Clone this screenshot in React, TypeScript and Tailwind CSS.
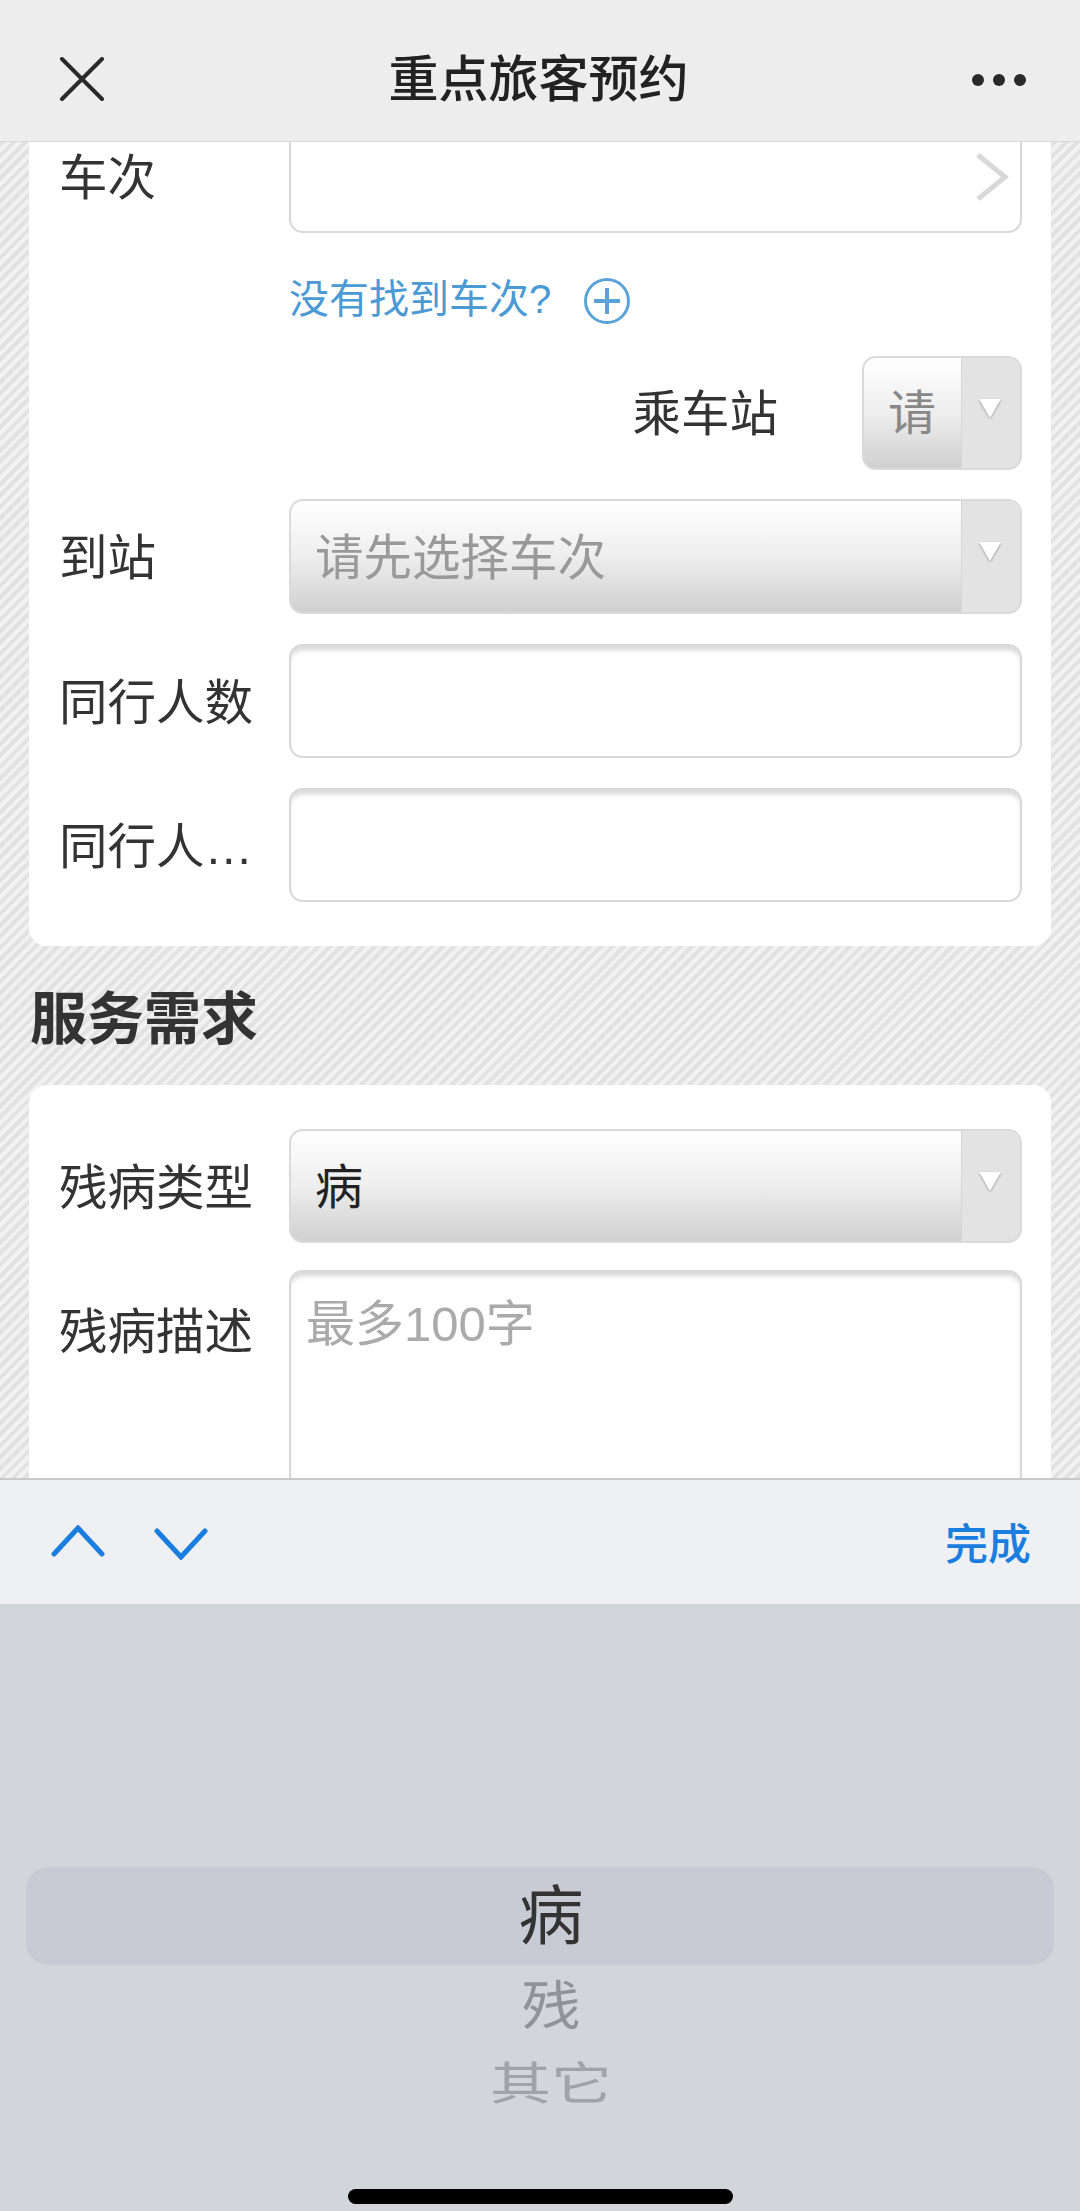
const Triangle = () => (
  <svg width="24" height="22" viewBox="0 0 24 22" className="drop-shadow-[0_1px_1px_rgba(0,0,0,0.35)]">
    <polygon points="1,2 23,2 12,21" fill="#fff" />
  </svg>
);

const Select = ({ text, className, textClass }: { text: string; className: string; textClass: string }) => (
  <div
    className={`flex overflow-hidden rounded-[14px] border-2 border-[#dadada] bg-gradient-to-b from-white via-[#eeeeee] to-[#d0d0d0] ${className}`}
  >
    <div className={`flex min-w-0 flex-1 items-center whitespace-nowrap ${textClass}`}>{text}</div>
    <div className="flex w-[59px] shrink-0 justify-center border-l border-[#d6d6d6] bg-[#e3e3e3] pt-[39px] pr-[3px]">
      <Triangle />
    </div>
  </div>
);

const Input = ({ className }: { className: string }) => (
  <div
    className={`rounded-[14px] border-2 border-[#d8d8d8] bg-white shadow-[inset_0_6px_5px_-2px_rgba(0,0,0,0.16)] ${className}`}
  />
);

const Label = ({ text, className = "" }: { text: string; className?: string }) => (
  <div className={`w-[230px] shrink-0 pt-[3px] text-[48.5px] leading-[64px] text-[#333] ${className}`}>{text}</div>
);

export default function App() {
  return (
    <div className="relative flex h-[2211px] w-[1080px] flex-col overflow-hidden bg-white font-['Liberation_Sans','Noto_Sans_CJK_SC',sans-serif]">
      {/* title bar */}
      <div className="flex h-[142px] shrink-0 items-center justify-between border-b border-[#d9d9d9] bg-[#ededed] pt-[18px] pr-[54px] pl-[59px]">
        <svg width="46" height="46" viewBox="0 0 46 46" fill="none" stroke="#2a2a2a" strokeWidth="4" strokeLinecap="round">
          <path d="M3 2 L43 42 M43 2 L3 42" />
        </svg>
        <div className="text-[50px] leading-none font-medium text-[#222]">重点旅客预约</div>
        <div className="flex gap-[9px]">
          <span className="h-[12px] w-[12px] rounded-full bg-[#2a2a2a]" />
          <span className="h-[12px] w-[12px] rounded-full bg-[#2a2a2a]" />
          <span className="h-[12px] w-[12px] rounded-full bg-[#2a2a2a]" />
        </div>
      </div>

      {/* page behind the picker */}
      <div className="h-[1336px] shrink-0 overflow-hidden bg-[repeating-linear-gradient(135deg,#e2e2e2_0px,#e2e2e2_4px,#f1f1f1_4px,#f1f1f1_8px)] px-[29px]">
        <div className="rounded-b-[18px] bg-white pr-[29px] pb-[44px] pl-[30px]">
          <div className="flex">
            <Label text="车次" className="pt-[4px]" />
            <div className="flex h-[91px] flex-1 justify-end rounded-b-[14px] border-x-2 border-b-2 border-[#d8d8d8] pt-[11px] pr-[11px]">
              <svg width="34" height="48" viewBox="0 0 34 48" fill="none" stroke="#d8d8d8" strokeWidth="5">
                <path d="M3 2 L30 24 L3 46" />
              </svg>
            </div>
          </div>

          <div className="mt-[43px] ml-[230px] flex h-[46px] items-center">
            <span className="text-[40px] leading-none text-[#4a9ad4]">没有找到车次?</span>
            <svg width="48" height="48" viewBox="0 0 48 48" fill="none" stroke="#5aa3d8" className="mt-[4px] ml-[32px]">
              <circle cx="24" cy="24" r="21.5" strokeWidth="3" />
              <path d="M11 24 H37 M24 11 V37" strokeWidth="4" />
            </svg>
          </div>

          <div className="mt-[34px] flex items-center justify-end">
            <div className="mr-[84px] pt-[2px] text-[48.5px] leading-[64px] text-[#333]">乘车站</div>
            <Select text="请" className="h-[114px] w-[160px]" textClass="pl-[24px] pt-[2px] text-[48px] text-[#888]" />
          </div>

          <div className="mt-[29px] flex items-center">
            <Label text="到站" />
            <Select text="请先选择车次" className="h-[115px] flex-1" textClass="pl-[24px] pt-[4px] text-[48.5px] text-[#999]" />
          </div>

          <div className="mt-[30px] flex items-center">
            <Label text="同行人数" />
            <Input className="h-[114px] flex-1" />
          </div>

          <div className="mt-[30px] flex items-center">
            <Label text="同行人…" />
            <Input className="h-[114px] flex-1" />
          </div>
        </div>

        <div className="flex h-[139px] items-center pt-[8px] pl-[1px] text-[57px] leading-none font-bold text-[#333]">
          服务需求
        </div>

        <div className="rounded-[18px] bg-white pt-[44px] pr-[29px] pl-[30px]">
          <div className="flex items-center">
            <Label text="残病类型" />
            <Select text="病" className="h-[114px] flex-1" textClass="pl-[24px] pt-[3px] text-[48px] text-[#222]" />
          </div>
          <div className="mt-[27px] flex">
            <Label text="残病描述" className="pt-[30px]" />
            <div className="h-[260px] flex-1 rounded-[14px] border-2 border-[#d8d8d8] pt-[22px] pl-[15px] text-[49px] leading-[60px] text-[#aaa] shadow-[inset_0_6px_5px_-2px_rgba(0,0,0,0.16)]">
              最多100字
            </div>
          </div>
        </div>
      </div>

      {/* keyboard accessory */}
      <div className="flex h-[126px] shrink-0 items-center justify-between border-t-2 border-[#c9c9c9] bg-[#eef0f3] pr-[49px] pl-[51px]">
        <div className="flex items-center gap-[49px]">
          <svg width="54" height="32" viewBox="0 0 54 32" fill="none" stroke="#1a7de0" strokeWidth="5" strokeLinecap="round" className="mb-[3px]">
            <path d="M3 29 L27 3 L51 29" />
          </svg>
          <svg width="54" height="32" viewBox="0 0 54 32" fill="none" stroke="#1a7de0" strokeWidth="5" strokeLinecap="round" className="mt-[3px]">
            <path d="M3 3 L27 29 L51 3" />
          </svg>
        </div>
        <div className="pt-[6px] text-[43px] leading-none font-medium text-[#1a7de0]">完成</div>
      </div>

      {/* picker wheel */}
      <div className="flex flex-1 flex-col bg-[#d2d5da] pt-[263px]">
        <div className="mx-[26px] flex h-[98px] items-center justify-center rounded-[22px] bg-[#c8cbd3] pl-[22px] text-[65px] leading-none text-[#333]">
          病
        </div>
        <div className="flex h-[82px] scale-y-90 items-center justify-center pt-[2px] pl-[22px] text-[59px] leading-none text-[#909397]">残</div>
        <div className="flex h-[72px] scale-y-75 items-center justify-center pt-[3px] pl-[22px] text-[61px] leading-none text-[#a0a3a7]">其它</div>
        <div className="mx-auto mt-[70px] h-[15px] w-[385px] rounded-full bg-black" />
      </div>
    </div>
  );
}
